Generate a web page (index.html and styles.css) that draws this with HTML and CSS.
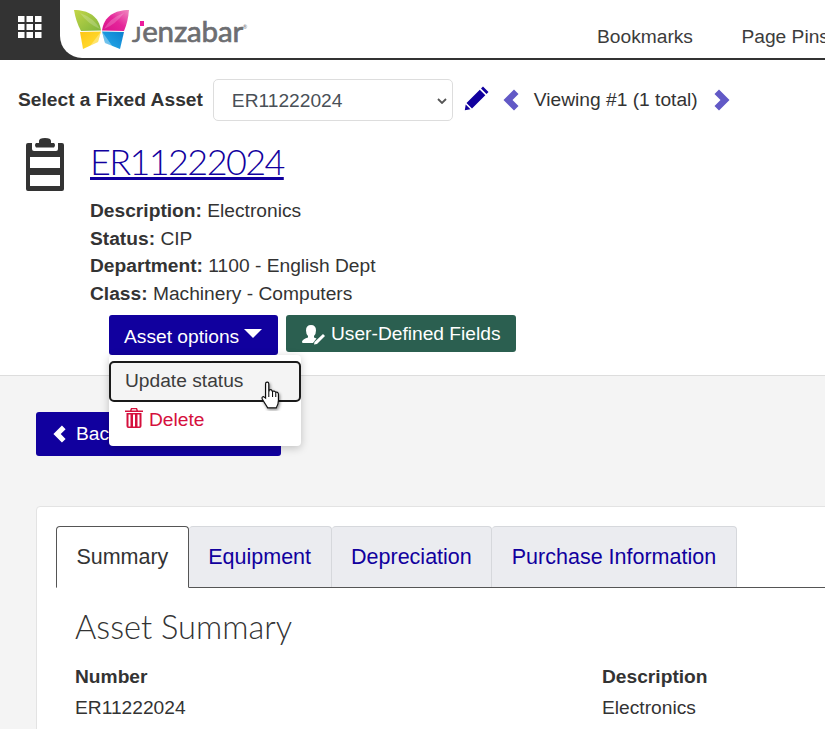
FILE: index.html
```html
<!DOCTYPE html>
<html lang="en">
<head>
<meta charset="utf-8">
<title>Fixed Asset</title>
<link rel="stylesheet" href="styles.css">
</head>
<body>
<header class="topbar">
  <div class="apps">
    <svg class="apps-icon" width="24" height="23" viewBox="0 0 24 23"><g fill="#fff"><rect x="0" y="0" width="6.5" height="6"/><rect x="8.5" y="0" width="6.5" height="6"/><rect x="17" y="0" width="6.5" height="6"/><rect x="0" y="8" width="6.5" height="6"/><rect x="8.5" y="8" width="6.5" height="6"/><rect x="17" y="8" width="6.5" height="6"/><rect x="0" y="16" width="6.5" height="6"/><rect x="8.5" y="16" width="6.5" height="6"/><rect x="17" y="16" width="6.5" height="6"/></g></svg>
  </div>
  <div class="brandbar">
    <div class="brand">
      <svg class="butterfly" width="56" height="41" viewBox="0 0 56 41">
        <defs>
          <linearGradient id="gl" x1="0" y1="0" x2="1" y2="1"><stop offset="0" stop-color="#c4d648"/><stop offset="1" stop-color="#7fb53c"/></linearGradient>
          <linearGradient id="gr" x1="1" y1="0" x2="0" y2="1"><stop offset="0" stop-color="#f08cc0"/><stop offset=".5" stop-color="#e5259a"/><stop offset="1" stop-color="#d9128c"/></linearGradient>
          <linearGradient id="gy" x1="0" y1="0" x2="1" y2="1"><stop offset="0" stop-color="#ffc514"/><stop offset="1" stop-color="#ffe23a"/></linearGradient>
          <linearGradient id="gb" x1="1" y1="0" x2="0" y2="1"><stop offset="0" stop-color="#0b7fd0"/><stop offset=".7" stop-color="#1fa0e2"/><stop offset="1" stop-color="#bfe3f6"/></linearGradient>
        </defs>
        <path d="M0 0C14 0 25 6 27 20.500L7 21Q2 12 0 0Z" fill="url(#gl)"/>
        <path d="M55 0C41 0 30 6 28 20.500L50 21Q54 12 55 0Z" fill="url(#gr)"/>
        <path d="M6 22 27 21.500 24 32 9 39Z" fill="url(#gy)"/>
        <path d="M50 22 28 21.500 31 33 46 39Z" fill="url(#gb)"/>
        <path d="M27 21.500 24 32 16 36Z" fill="#fff" opacity=".3"/>
        <path d="M28 21.500 31 33 39 37Z" fill="#fff" opacity=".35"/>
        <path d="M6 3Q20 8 26 19 14 14 6 3Z" fill="#fff" opacity=".2"/>
        <path d="M50 3Q36 8 30 19 42 14 50 3Z" fill="#fff" opacity=".2"/>
      </svg>
      <span class="wordmark"><span class="wm-j">J</span>enzabar<i class="wm-dot"></i><sup class="wm-reg">®</sup></span>
    </div>
    <nav class="topnav"><span>Bookmarks</span><span>Page Pins</span></nav>
  </div>
</header>

<section class="context">
  <div class="picker">
    <label class="picker-label" for="asset">Select a Fixed Asset</label>
    <select id="asset" class="picker-select"><option>ER11222024</option></select>
    <svg class="pencil" width="26" height="26" viewBox="0 0 26 26"><path fill="#11009e" d="M19 1.500 24.500 7 22.500 9 17 3.500ZM15.800 4.700 21.300 10.200 8 23.500 2.500 18ZM1.700 19.500 6.500 24.300 0.800 25.300Z"/></svg>
    <svg class="chev" width="16" height="22" viewBox="0 0 16 22"><path fill="#6259c6" d="M11 0.500 15.500 5 9.500 11 15.500 17 11 21.500 0.500 11Z"/></svg>
    <span class="viewing">Viewing #1 (1 total)</span>
    <svg class="chev chev-next" width="16" height="22" viewBox="0 0 16 22"><path fill="#6259c6" d="M5 0.500 0.500 5 6.500 11 0.500 17 5 21.500 15.500 11Z"/></svg>
  </div>

  <div class="asset">
    <svg class="clipboard" width="38" height="55" viewBox="0 0 38 55"><path fill="#333" fill-rule="evenodd" d="M13 4Q13 1 19 1T25 4V6H28Q30 8 28 10.500H10Q8 8 10 6H13ZM2 6H6V12Q6 14 8 14H30Q32 14 32 12V6H36Q38 6 38 8V52Q38 54 36 54H2Q0 54 0 52V8Q0 6 2 6ZM4 20V31H34V20ZM4 38V49H34V38Z"/></svg>
    <div class="asset-body">
      <h1 class="asset-title"><a href="#">ER11222024</a></h1>
      <dl class="facts">
        <div><dt>Description:</dt> <dd>Electronics</dd></div>
        <div><dt>Status:</dt> <dd>CIP</dd></div>
        <div><dt>Department:</dt> <dd>1100 - English Dept</dd></div>
        <div><dt>Class:</dt> <dd>Machinery - Computers</dd></div>
      </dl>
      <div class="actions">
        <div class="menu-wrap">
          <button class="btn btn-primary btn-options">Asset options<i class="caret"></i></button>
          <ul class="menu">
            <li class="menu-item menu-focus">Update status
              <svg class="hand" width="24" height="30" viewBox="0 0 22 28"><defs><filter id="s" x="-30%" y="-30%" width="170%" height="170%"><feDropShadow dx="1" dy="1.500" stdDeviation="1.500" flood-opacity=".45"/></filter></defs><path filter="url(#s)" fill="#fff" stroke="#111" stroke-width="1.100" d="M5 2.500Q5 1 6.500 1T8 2.500V10L8.500 8.500Q10 7.500 11 9L11.500 10Q13 8.500 14.500 10.500Q16.500 10 17 12V18Q17 22 15 25H7L2 17Q1 15 3 14.500L5 16Z"/><path stroke="#111" fill="none" d="M8 10V15M11.500 10V15M14.500 10.500V15"/></svg>
            </li>
            <li class="menu-item menu-danger">
              <svg class="trash" width="18" height="20" viewBox="0 0 18 20"><path fill="#d5103d" fill-rule="evenodd" d="M6 0H12L13 2.500H18V4H0V2.500H5ZM7 1.200 6.600 2.500H11.400L11 1.200ZM1.500 5H16.500V18Q16.500 20 14.500 20H3.500Q1.500 20 1.500 18ZM3.500 6.500V18.500H5.500V6.500ZM8 6.500V18.500H10V6.500ZM12.500 6.500V18.500H14.500V6.500Z"/></svg>
              Delete
            </li>
          </ul>
        </div>
        <button class="btn btn-green">
          <svg class="udf" width="24" height="22" viewBox="0 0 24 22"><path fill="#fff" d="M9 1Q14 1 14 6.500Q14 10 12 12V13.500L14.500 14.500 11 19H1Q0 19 0 17.500Q1 15 6 13.500V12Q4 10 4 6.500Q4 1 9 1ZM21 10 23 12 15 20 12 20.500 12.500 18Z"/></svg>
          <span class="btn-label">User-Defined Fields</span>
        </button>
      </div>
    </div>
  </div>
</section>

<main class="content">
  <button class="btn btn-primary btn-back">
    <svg width="13" height="18" viewBox="0 0 16 22"><path fill="#fff" d="M11 0.500 15.500 5 9.500 11 15.500 17 11 21.500 0.500 11Z"/></svg>
    Back to Fixed Assets
  </button>
  <article class="card">
    <div class="tabs">
      <a class="tab tab-active">Summary</a>
      <a class="tab">Equipment</a>
      <a class="tab">Depreciation</a>
      <a class="tab">Purchase Information</a>
    </div>
    <div class="panel">
      <h2 class="panel-title">Asset Summary</h2>
      <div class="summary">
        <div><h3>Number</h3><p>ER11222024</p></div>
        <div><h3>Description</h3><p>Electronics</p></div>
      </div>
    </div>
  </article>
</main>
</body>
</html>
```
FILE: styles.css
```css
* { box-sizing: border-box; }
html, body { margin: 0; height: 100%; overflow: hidden; }
body {
  width: 825px;
  height: 729px;
  font-family: "Liberation Sans", Arial, sans-serif;
  font-size: 19.2px;
  color: #333;
  background: #f4f4f4;
  display: flex;
  flex-direction: column;
}
.topbar { height: 60px; display: flex; background: #333; flex: none; }
.apps { width: 60px; height: 60px; padding: 16px 0 0 18px; flex: none; }
.apps-icon { display: block; }
.brandbar {
  flex: 1;
  min-width: 0;
  height: 58px;
  background: #fff;
  border-bottom-left-radius: 22px;
  display: flex;
  justify-content: space-between;
  overflow: hidden;
}
.brand { display: flex; padding: 10px 0 0 14px; width: 537px; flex: none; }
.butterfly { display: block; }
.wordmark {
  position: relative;
  font-family: "Lato", sans-serif;
  font-size: 29.5px;
  line-height: 40px;
  height: 40px;
  margin: 1px 0 0 2px;
  color: #6d6e71;
  -webkit-text-stroke: .7px #6d6e71;
  letter-spacing: -.15px;
  white-space: nowrap;
}
.wm-j { font-size: 22px; margin-right: 1px; }
.wm-dot { position: absolute; left: 8px; top: 10px; width: 4px; height: 5px; background: #ec1c9c; }
.wm-reg { font-size: 5px; position: absolute; top: 14px; line-height: 1; -webkit-text-stroke: 0; }
.topnav { flex: 1; display: flex; gap: 48.5px; padding-top: 25px; white-space: nowrap; line-height: 24px; color: #3c3c3c; }

.context { background: #fff; height: 316px; border-bottom: 1px solid #ddd; flex: none; position: relative; z-index: 2; padding: 19px 0 0 18px; }
.picker { display: flex; align-items: center; height: 42px; }
.picker-label { font-weight: 700; margin-right: 10px; }
.picker-select {
  appearance: none;
  width: 240px;
  height: 42px;
  font: 19.2px "Liberation Sans", Arial, sans-serif;
  color: #495057;
  background: #fff url("data:image/svg+xml,%3Csvg xmlns='http://www.w3.org/2000/svg' width='10' height='6' viewBox='0 0 10 6'%3E%3Cpath d='M1 1l4 4 4-4' fill='none' stroke='%23555' stroke-width='1.800'/%3E%3C/svg%3E") no-repeat 223px 18px;
  border: 1px solid #ddd;
  border-radius: 5px;
  padding: 0 24px 0 18px;
}
.pencil { margin: 0 0 5px 11px; }
.chev { margin-left: 13px; }
.viewing { margin-left: 15px; }
.chev-next { margin-left: 16px; }

.asset { display: flex; margin-top: 14px; padding-left: 8px; }
.clipboard { flex: none; margin-top: 2px; }
.asset-body { margin-left: 26px; flex: 1; }
.asset-title { margin: 0; font: 300 36px/52px "Lato", sans-serif; letter-spacing: -1.6px; }
.asset-title a { color: #11009e; }
.facts { margin: 10px 0 0; line-height: 27.7px; }
.facts div { height: 27.7px; }
.facts dt { display: inline; font-weight: 700; }
.facts dd { display: inline; margin: 0; }

.actions { display: flex; align-items: flex-start; gap: 8px; margin: 7px 0 0 19px; }
.menu-wrap { position: relative; }
.btn {
  border: 0;
  border-radius: 3px;
  color: #fff;
  font: 19.2px "Liberation Sans", Arial, sans-serif;
  display: flex;
  align-items: center;
  white-space: nowrap;
}
.btn-primary { background: #11009e; }
.btn-options { width: 169px; height: 40px; padding: 4px 0 0 15px; }
.caret { width: 0; height: 0; margin: -6px 0 0 5px; border: 9px solid transparent; border-top: 9px solid #fff; border-bottom: 0; }
.btn-green { width: 230px; height: 37px; background: #2b5f50; padding: 0 0 0 16px; gap: 5px; }
.btn-label { margin-top: 1px; }
.udf { flex: none; margin-top: 3px; }

.menu {
  position: absolute;
  top: 40px;
  left: 0;
  width: 192px;
  height: 91px;
  margin: 0;
  padding: 6px 0 0;
  list-style: none;
  background: #fff;
  border-radius: 4px;
  box-shadow: 0 2px 8px rgba(0,0,0,.22);
  z-index: 5;
}
.menu-item { height: 41px; display: flex; align-items: center; padding-left: 16px; position: relative; line-height: 20px; }
.menu-focus { background: #f4f4f4; border: 2px solid #1a1a1a; border-radius: 5px; padding-left: 14px; color: #3c3c3c; }
.menu-danger { color: #d5103d; gap: 6px; height: 36px; }
.trash { flex: none; margin-top: -3px; }
.hand { position: absolute; left: 149px; top: 18px; z-index: 6; }

.content { flex: 1; padding: 36px 0 0 36px; min-height: 0; }
.btn-back { width: 245px; height: 44px; padding-left: 17px; gap: 10px; }
.card {
  width: 860px;
  height: 400px;
  margin-top: 50px;
  padding: 19px 0 0 19px;
  background: #fff;
  border: 1px solid #e3e3e3;
  border-radius: 4px;
}
.tabs { display: flex; height: 62px; border-bottom: 1px solid #555; width: 900px; }
.tab {
  height: 61px;
  line-height: 60px;
  padding: 0 19.5px;
  color: #11009e;
  font-size: 21.5px;
  background: #ebecf0;
  border: 1px solid #d6d8dc;
  border-bottom: 0;
  border-left: 0;
  border-radius: 4px 4px 0 0;
}
.tab-active {
  height: 62px;
  padding: 0 19.4px;
  color: #333;
  background: #fff;
  border: 1px solid #555;
  border-bottom: 1px solid #fff;
}
.panel { padding: 0 0 0 19px; }
.panel-title { margin: 17px 0 0; font: 300 32.6px/44px "Lato", sans-serif; color: #333; }
.summary { display: grid; grid-template-columns: 527px 1fr; margin-top: 14px; }
.summary h3 { margin: 0; font-size: 19.2px; line-height: 28px; font-weight: 700; }
.summary p { margin: 0; line-height: 34px; }
```
